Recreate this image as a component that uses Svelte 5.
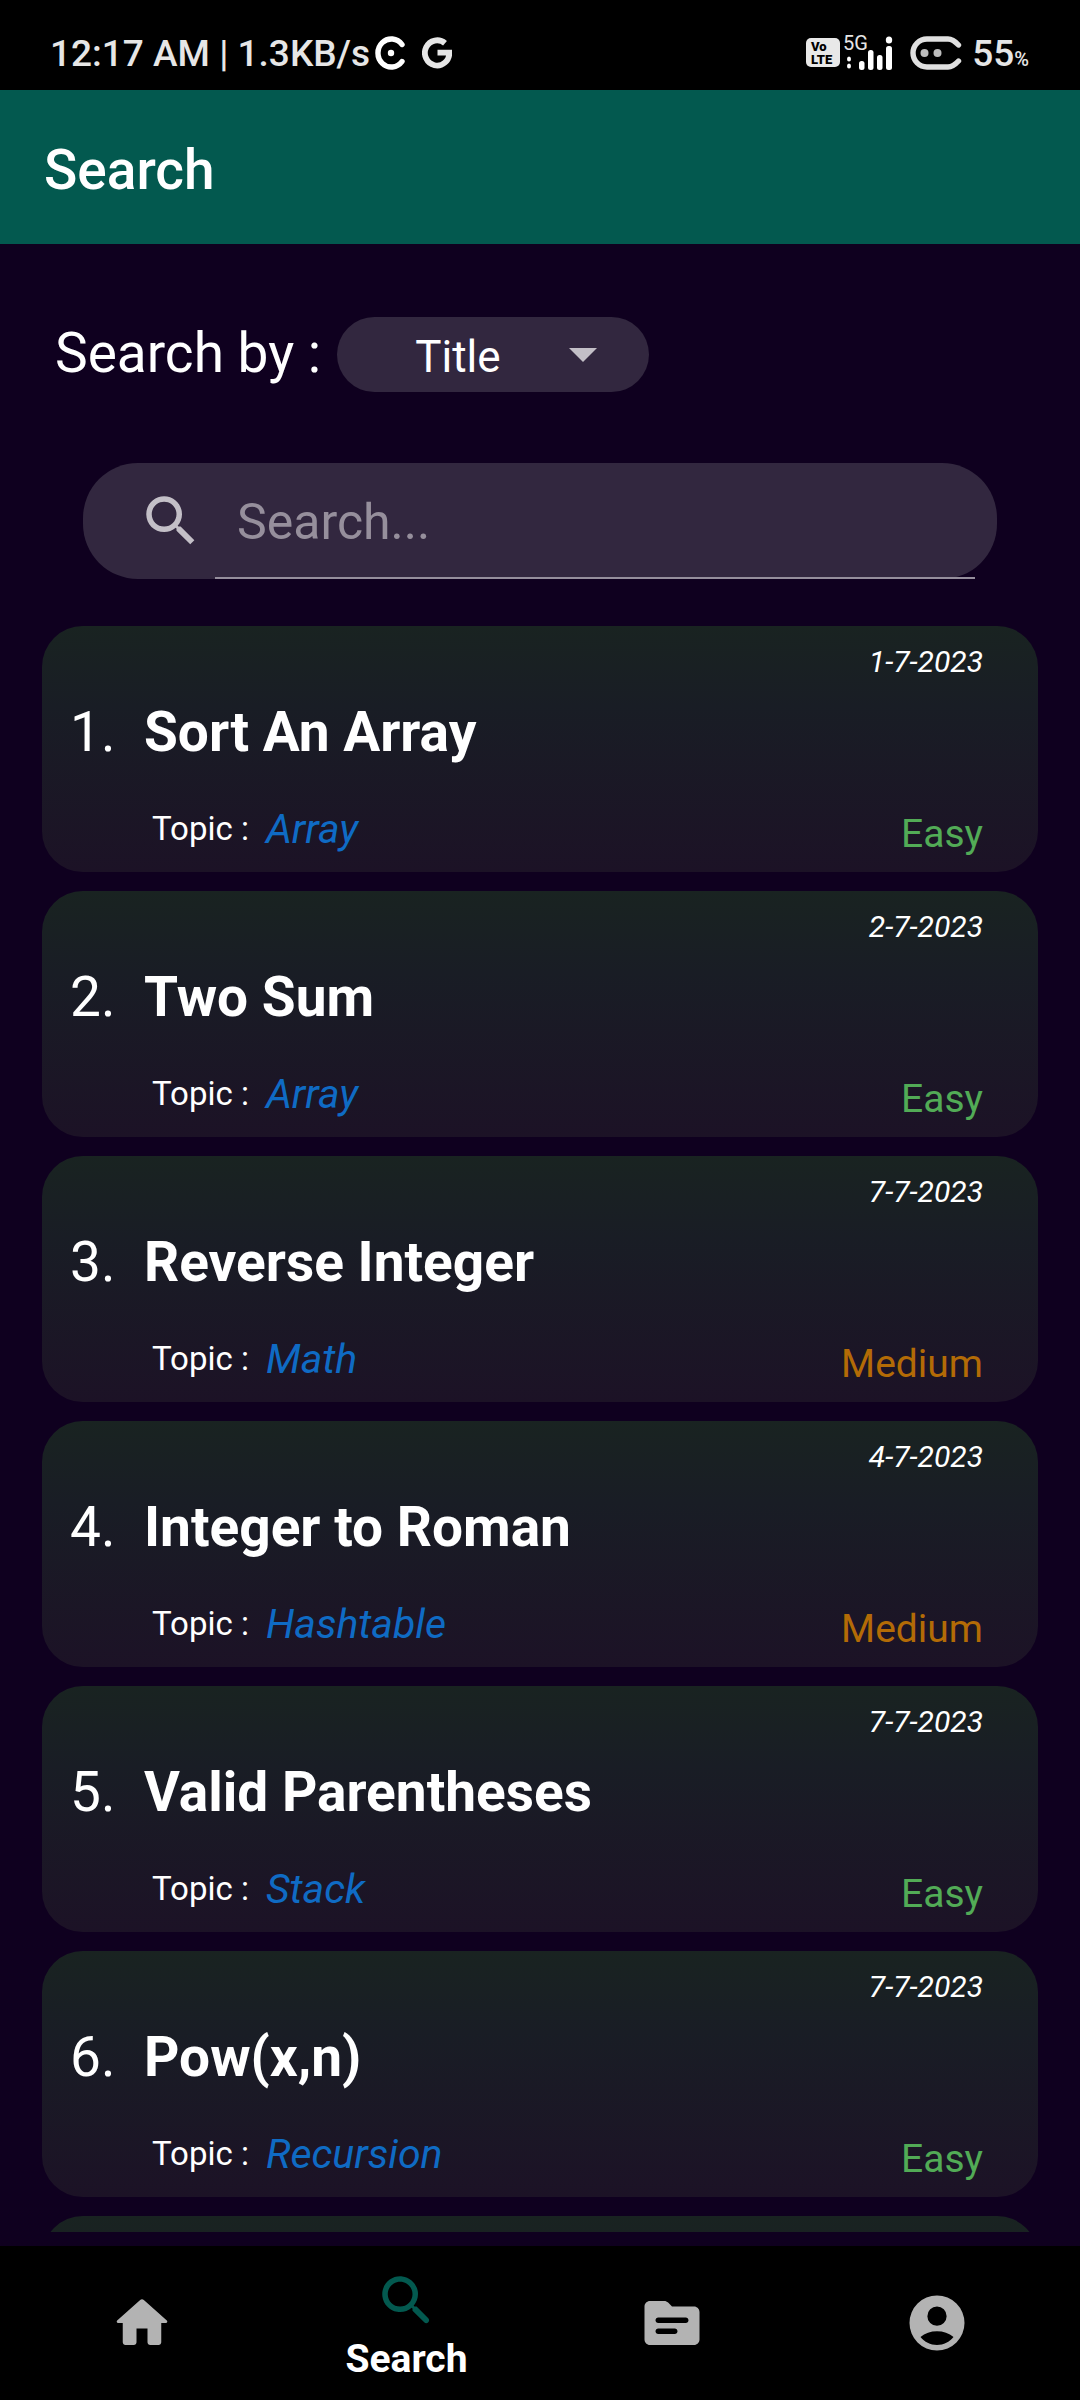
<script lang="ts">
  type Problem = { title: string; topic: string; level: 'Easy' | 'Medium'; date: string };

  const problems: Problem[] = [
    { title: 'Sort An Array', topic: 'Array', level: 'Easy', date: '1-7-2023' },
    { title: 'Two Sum', topic: 'Array', level: 'Easy', date: '2-7-2023' },
    { title: 'Reverse Integer', topic: 'Math', level: 'Medium', date: '7-7-2023' },
    { title: 'Integer to Roman', topic: 'Hashtable', level: 'Medium', date: '4-7-2023' },
    { title: 'Valid Parentheses', topic: 'Stack', level: 'Easy', date: '7-7-2023' },
    { title: 'Pow(x,n)', topic: 'Recursion', level: 'Easy', date: '7-7-2023' },
  ];

  let query = $state('');
  let field = $state('Title');
</script>

<div class="screen">
  <div class="status">
    <span class="clock">12:17 AM | 1.3KB/s</span>
    <svg class="c-icon" width="32" height="34" viewBox="0 0 32 34" aria-hidden="true">
      <path d="M28 8.500A13.400 14 0 1 0 28 25.500" fill="none" stroke="#fff" stroke-width="5.400" stroke-linecap="round" />
      <circle cx="17" cy="17" r="3.200" fill="#fff" />
    </svg>
    <svg class="g-icon" width="30" height="32" viewBox="0 0 30 32" aria-hidden="true">
      <path d="M23 6.300A12.200 12.600 0 1 0 27.300 15.600H15.500" fill="none" stroke="#e6e6e6" stroke-width="5.800" />
    </svg>

    <svg class="volte" width="34" height="30" viewBox="0 0 34 30" role="img" aria-label="VoLTE">
      <rect width="34" height="29" rx="5" fill="#e8e8e8" />
      <text x="5" y="13" font-size="13">Vo</text>
      <text x="5" y="26" font-size="13">LTE</text>
    </svg>
    <svg class="signal" width="50" height="44" viewBox="0 -4 50 44" role="img" aria-label="5G signal">
      <text x="0" y="15" font-size="20">5G</text>
      <g fill="#fff">
        <ellipse cx="6" cy="24" rx="2" ry="2.5" />
        <ellipse cx="6" cy="31" rx="2" ry="2.5" />
        <rect x="16" y="26" width="5.5" height="9" rx="2.5" />
        <rect x="25" y="15" width="5.5" height="20" rx="2.5" />
        <rect x="34" y="20" width="5.5" height="15" rx="2.5" />
        <rect x="43" y="11" width="6" height="24" rx="2.5" />
        <ellipse cx="46" cy="5" rx="3.2" ry="3.5" />
      </g>
    </svg>
    <svg class="battery" width="52" height="34" viewBox="0 0 52 34" role="img" aria-label="Battery">
      <path d="M48.5 9 Q43 3 38 3H17A14 14 0 0 0 17 31H38Q43 31 48.5 25" fill="none" stroke="#e0e0e0" stroke-width="5.4" stroke-linecap="round" />
      <circle cx="14.5" cy="17" r="4" fill="#bdbdbd" />
      <circle cx="27.5" cy="17" r="4" fill="#bdbdbd" />
    </svg>
    <span class="percent">55<small>%</small></span>
  </div>

  <header><h1>Search</h1></header>

  <main>
    <div class="filter">
      <label for="field">Search by :</label>
      <div class="picker">
        <select id="field" bind:value={field}>
          <option>Title</option>
          <option>Topic</option>
        </select>
        <svg width="28" height="14" viewBox="0 0 28 14" aria-hidden="true"><path d="M0 0H28L14 14Z" fill="#c3bfc7" /></svg>
      </div>
    </div>

    <div class="searchbar">
      <svg width="66" height="66" viewBox="0 0 24 24" aria-hidden="true">
        <path fill="#c3bfc7" d="M15.5 14h-.79l-.28-.27C15.41 12.59 16 11.11 16 9.5 16 5.91 13.09 3 9.5 3S3 5.91 3 9.5 5.91 16 9.5 16c1.61 0 3.09-.59 4.23-1.57l.27.28v.79l5 4.99L20.49 19l-4.99-5zm-6 0C7.01 14 5 11.99 5 9.5S7.01 5 9.5 5 14 7.01 14 9.5 11.99 14 9.5 14z" />
      </svg>
      <input type="text" placeholder="Search..." aria-label="Search problems" bind:value={query} />
    </div>

    <ul>
      {#each problems as p, i}
        <li>
          <time>{p.date}</time>
          <div class="heading">
            <span class="number">{i + 1}.</span>
            <h2>{p.title}</h2>
          </div>
          <div class="details">
            <span class="label">Topic :</span>
            <em>{p.topic}</em>
            <span class="level" class:medium={p.level === 'Medium'}>{p.level}</span>
          </div>
        </li>
      {/each}
      <li aria-hidden="true"></li>
    </ul>
  </main>

  <nav>
    <button aria-label="Home">
      <svg width="66" height="66" viewBox="0 0 24 24" aria-hidden="true">
        <path fill="#b3b3b3" d="M10 19v-5h4v5c0 .55.45 1 1 1h3c.55 0 1-.45 1-1v-7h1.7c.46 0 .68-.57.33-.87L12.67 3.6c-.38-.34-.96-.34-1.34 0l-8.36 7.53c-.34.3-.13.87.33.87H5v7c0 .55.45 1 1 1h3c.55 0 1-.45 1-1z" />
      </svg>
    </button>
    <button class="active">
      <svg width="66" height="66" viewBox="0 0 24 24" aria-hidden="true">
        <path fill="#03594f" d="M15.5 14h-.79l-.28-.27c1.2-1.4 1.82-3.31 1.48-5.34-.47-2.78-2.79-5-5.59-5.34-4.23-.52-7.79 3.04-7.27 7.27.34 2.8 2.56 5.12 5.34 5.59 2.03.34 3.94-.28 5.34-1.48l.27.28v.79l4.25 4.25c.41.41 1.08.41 1.49 0 .41-.41.41-1.08 0-1.49L15.5 14zm-6 0C7.01 14 5 11.99 5 9.5S7.01 5 9.5 5 14 7.01 14 9.5 11.99 14 9.5 14z" />
      </svg>
      <span>Search</span>
    </button>
    <button aria-label="Topics">
      <svg width="66" height="66" viewBox="0 0 24 24" aria-hidden="true">
        <path fill="#b3b3b3" d="M20 6h-8l-1.41-1.41C10.21 4.21 9.7 4 9.17 4H4c-1.1 0-2 .9-2 2v12c0 1.1.9 2 2 2h16c1.1 0 2-.9 2-2V8c0-1.1-.9-2-2-2zm-7 10H7c-.55 0-1-.45-1-1s.45-1 1-1h6c.55 0 1 .45 1 1s-.45 1-1 1zm4-4H7c-.55 0-1-.45-1-1s.45-1 1-1h10c.55 0 1 .45 1 1s-.45 1-1 1z" />
      </svg>
    </button>
    <button aria-label="Profile">
      <svg width="66" height="66" viewBox="0 0 24 24" aria-hidden="true">
        <path fill="#b3b3b3" fill-rule="evenodd" d="M12 2a10 10 0 1 0 0 20a10 10 0 1 0 0-20zM12 6a3.5 3.5 0 1 1 0 7a3.5 3.5 0 1 1 0-7zM12 20c-2.4 0-4.6-1.1-6-2.9C7.6 15.7 9.7 15 12 15s4.4.7 6 2.1C16.6 18.9 14.4 20 12 20z" />
      </svg>
    </button>
  </nav>
</div>

<style>
  :global(body) {
    background: #0f001f;
  }
  .screen {
    height: 100vh;
    display: flex;
    flex-direction: column;
    background: #0f001f;
    color: #fff;
    font-family: Roboto, 'Liberation Sans', sans-serif;
  }
  svg {
    flex: none;
    display: block;
  }

  .status {
    height: 90px;
    flex: none;
    box-sizing: border-box;
    padding: 16px 51px 0 50px;
    display: flex;
    align-items: center;
    background: #000;
    color: #e6e6e6;
    font-size: 37px;
    font-weight: 500;
    white-space: nowrap;
  }
  .status text {
    font-weight: 900;
    fill: #000;
  }
  .status .signal text {
    font-weight: 400;
    fill: #e6e6e6;
  }
  .c-icon {
    margin-left: 4px;
  }
  .g-icon {
    margin-left: 16px;
  }
  .volte {
    margin-left: auto;
  }
  .signal {
    margin-left: 3px;
  }
  .battery {
    margin-left: 17px;
  }
  .percent {
    margin-left: 10px;
  }
  .percent small {
    font-size: 20px;
  }

  header {
    flex: none;
    padding: 48px 44px 42px;
    background: #03594f;
  }
  h1 {
    margin: 0;
    font-size: 55px;
    line-height: 64px;
    font-weight: 500;
  }

  main {
    flex: 1;
    min-height: 0;
    display: flex;
    flex-direction: column;
    padding: 73px 42px 14px;
  }
  .filter {
    display: flex;
    align-items: center;
    gap: 16px;
    padding-left: 13px;
  }
  .filter label {
    font-size: 55px;
    line-height: 64px;
    padding-bottom: 3px;
  }
  .picker {
    display: grid;
    align-items: center;
  }
  .picker > * {
    grid-area: 1 / 1;
  }
  .picker svg {
    justify-self: end;
    margin-right: 52px;
    pointer-events: none;
  }
  select {
    width: 312px;
    height: 75px;
    padding: 4px 78px 0;
    border: 0;
    border-radius: 38px;
    appearance: none;
    background: #32273f;
    color: #fff;
    font: 400 44px Roboto, 'Liberation Sans', sans-serif;
  }

  .searchbar {
    flex: none;
    margin: 71px 41px 47px;
    height: 116px;
    display: flex;
    align-items: center;
    border-radius: 55px;
    background: #32273f;
  }
  .searchbar svg {
    margin-left: 55px;
  }
  input {
    flex: 1;
    min-width: 0;
    height: 116px;
    box-sizing: border-box;
    margin: 0 22px 0 11px;
    padding: 4px 22px 0;
    border: 0;
    border-bottom: 2px solid #958e9c;
    background: none;
    color: #fff;
    font: 400 50px Roboto, 'Liberation Sans', sans-serif;
  }
  input::placeholder {
    color: #968f9c;
    opacity: 1;
  }

  ul {
    flex: 1;
    min-height: 0;
    overflow: hidden;
    margin: 0;
    padding: 0;
    display: flex;
    flex-direction: column;
    gap: 19px;
    list-style: none;
  }
  li {
    flex: none;
    min-height: 246px;
    box-sizing: border-box;
    padding: 18px 55px 9px 28px;
    display: flex;
    flex-direction: column;
    border-radius: 41px;
    background: linear-gradient(#192321, #191d25 33%, #1c1226);
  }
  time {
    align-self: flex-end;
    font-size: 30px;
    line-height: 36px;
    font-style: italic;
  }
  .heading {
    display: flex;
    margin: 20px 0 41px;
    font-size: 55px;
    line-height: 64px;
  }
  .number {
    flex: none;
    width: 74px;
  }
  h2 {
    margin: 0;
    font-size: 55px;
    font-weight: 700;
  }
  .details {
    display: flex;
    align-items: flex-start;
    padding-left: 82px;
    line-height: 48px;
  }
  .label {
    font-size: 33px;
  }
  em {
    margin-left: 17px;
    font-size: 41px;
    color: #0f6bc4;
  }
  .level {
    margin-left: auto;
    font-size: 39px;
    line-height: 58px;
    color: #52ab56;
  }
  .level.medium {
    color: #b36b06;
  }

  nav {
    flex: none;
    height: 154px;
    display: flex;
    padding: 0 11px 0 9px;
    background: #000;
  }
  button {
    flex: 1;
    padding: 0;
    border: 0;
    display: flex;
    flex-direction: column;
    align-items: center;
    justify-content: center;
    background: none;
    color: #fff;
    font: 700 39px/50px Roboto, 'Liberation Sans', sans-serif;
  }
  button.active {
    justify-content: flex-start;
    padding-top: 22px;
  }
</style>
